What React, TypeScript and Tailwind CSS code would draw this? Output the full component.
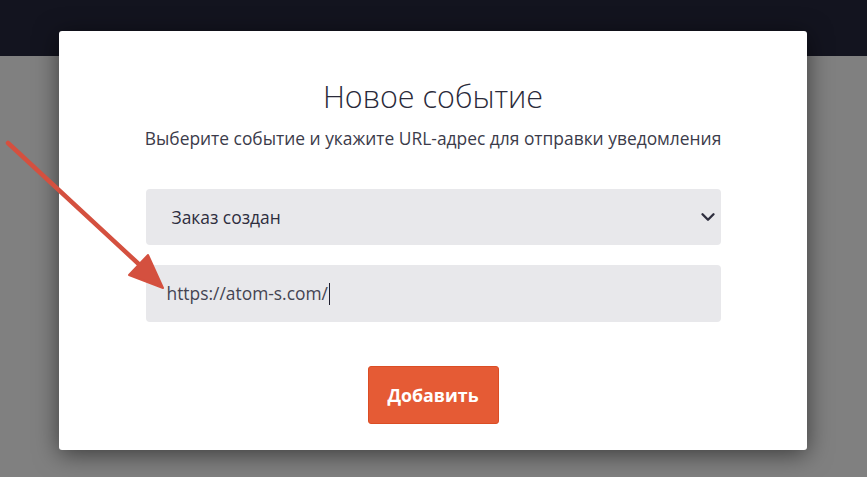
import { ChevronDown } from "lucide-react";

const font = { fontFamily: '"Open Sans", "Noto Sans", sans-serif' };

// red annotation arrow that points at the URL field
const Arrow = () => (
    <svg className="absolute left-0 top-0 pointer-events-none" width="867" height="477" viewBox="0 0 867 477">
        <line x1="8" y1="143" x2="143" y2="268" stroke="#d4503f" strokeWidth="4.5" strokeLinecap="round" />
        <polygon points="129,275 148,255 163,288" fill="#d4503f" stroke="#d4503f" strokeWidth="2" strokeLinejoin="round" />
    </svg>
);

export default function App() {
    return (
        <div className="relative w-[867px] h-[477px] overflow-hidden bg-[#808080] text-[#2c2c3b]" style={font}>
            <div className="h-[56px] bg-[#13141f]" />
            <div className="absolute left-[59px] top-[31px] w-[748px] h-[419px] bg-white rounded-[3px] shadow-[0_4px_24px_rgba(0,0,0,0.55)] flex flex-col items-center pt-[44px]">
                <h2 className="text-[30.5px] leading-[42px] font-light text-[#2a2a3a]">Новое событие</h2>
                <p className="mt-[9px] text-[17.4px] leading-[24px] text-[#3b3b4a]">
                    Выберите событие и укажите URL-адрес для отправки уведомления
                </p>
                <div className="mt-[39px] w-[575px] flex flex-col gap-[20px]">
                    <div className="h-[56px] rounded-[4px] bg-[#e8e8eb] flex items-center justify-between pl-[26px] pr-[2px]">
                        <span className="text-[17.4px] text-[#2e2e3e]">Заказ создан</span>
                        <ChevronDown size={22} strokeWidth={2.6} className="text-[#2e2e3e]" />
                    </div>
                    <div className="h-[57px] rounded-[4px] bg-[#e8e8eb] flex items-center pl-[21px]">
                        <span className="text-[17.4px] text-[#444452]">https://atom-s.com/</span>
                        <span className="ml-[1px] w-[1px] h-[22px] bg-[#1e1e2e]" />
                    </div>
                </div>
                <button className="mt-[44px] w-[131px] h-[58px] rounded-[3px] bg-[#e55b35] border border-[#db4d24] text-white font-bold text-[17.8px]">
                    Добавить
                </button>
            </div>
            <Arrow />
        </div>
    );
}
